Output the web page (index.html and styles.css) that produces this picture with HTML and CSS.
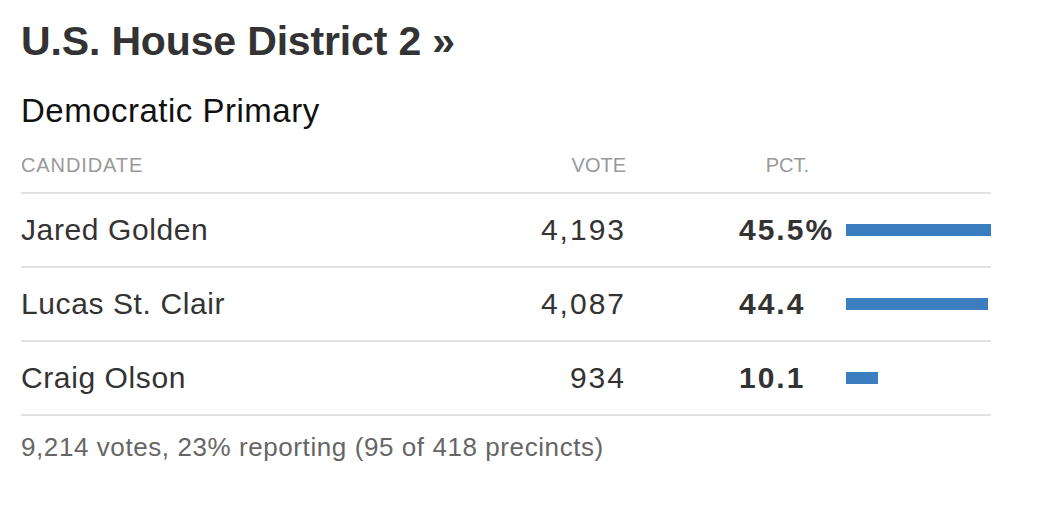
FILE: index.html
```html
<!DOCTYPE html>
<html lang="en">
<head>
<meta charset="utf-8">
<title>U.S. House District 2</title>
<link rel="stylesheet" href="styles.css">
</head>
<body>
<div class="race">
  <h2 class="race-title">U.S. House District 2 »</h2>
  <h3 class="race-sub">Democratic Primary</h3>
  <div class="results">
    <div class="row head">
      <div class="c-name">CANDIDATE</div>
      <div class="c-vote">VOTE</div>
      <div class="c-spacer"></div>
      <div class="c-pct head-pct">PCT.</div>
      <div class="c-bar"></div>
    </div>
    <div class="row">
      <div class="c-name">Jared Golden</div>
      <div class="c-vote">4,193</div>
      <div class="c-spacer"></div>
      <div class="c-pct">45.5%</div>
      <div class="c-bar"><span class="bar" style="width:100%"></span></div>
    </div>
    <div class="row">
      <div class="c-name">Lucas St. Clair</div>
      <div class="c-vote">4,087</div>
      <div class="c-spacer"></div>
      <div class="c-pct">44.4</div>
      <div class="c-bar"><span class="bar" style="width:97.6%"></span></div>
    </div>
    <div class="row">
      <div class="c-name">Craig Olson</div>
      <div class="c-vote">934</div>
      <div class="c-spacer"></div>
      <div class="c-pct">10.1</div>
      <div class="c-bar"><span class="bar" style="width:22.2%"></span></div>
    </div>
  </div>
  <p class="footnote">9,214 votes, 23% reporting (95 of 418 precincts)</p>
</div>
</body>
</html>
```

FILE: styles.css
```css
html, body {
  margin: 0;
  padding: 0;
  background: #fff;
}

body {
  font-family: "Liberation Sans", Arial, sans-serif;
  color: #333;
}

.race {
  padding: 17px 0 0 21px;
  width: 970px;
}

.race-title {
  margin: 0;
  font-size: 41px;
  line-height: 48px;
  font-weight: 700;
  color: #333;
  letter-spacing: -0.15px;
}

.race-sub {
  margin: 28px 0 0;
  font-size: 33px;
  line-height: 36px;
  font-weight: 400;
  color: #111;
  letter-spacing: 0.5px;
}

.results {
  margin-top: 24px;
}

.row {
  display: grid;
  grid-template-columns: 1fr 120px 113px 107px 145px;
  align-items: center;
  height: 72px;
  border-bottom: 2px solid #e2e2e2;
  font-size: 30px;
  line-height: 34px;
  color: #333;
}

.c-name {
  letter-spacing: 0.6px;
}

.row.head {
  height: auto;
  padding-bottom: 15px;
  align-items: end;
  font-size: 20px;
  line-height: 24px;
  color: #999;
}

.row.head .c-name {
  letter-spacing: 0.9px;
}

.c-vote {
  text-align: right;
  letter-spacing: 2px;
}

.row.head .c-vote {
  letter-spacing: 0;
}

.c-pct {
  font-weight: 700;
  letter-spacing: 2px;
}

.head-pct {
  font-weight: 400;
  letter-spacing: 0;
  text-align: right;
  padding-right: 37px;
}

.c-bar {
  display: flex;
  align-items: center;
}

.bar {
  display: block;
  height: 12px;
  background: #3b7ec0;
}

.footnote {
  margin: 16px 0 0;
  font-size: 26px;
  line-height: 30px;
  color: #666;
  letter-spacing: 0.58px;
}
```
